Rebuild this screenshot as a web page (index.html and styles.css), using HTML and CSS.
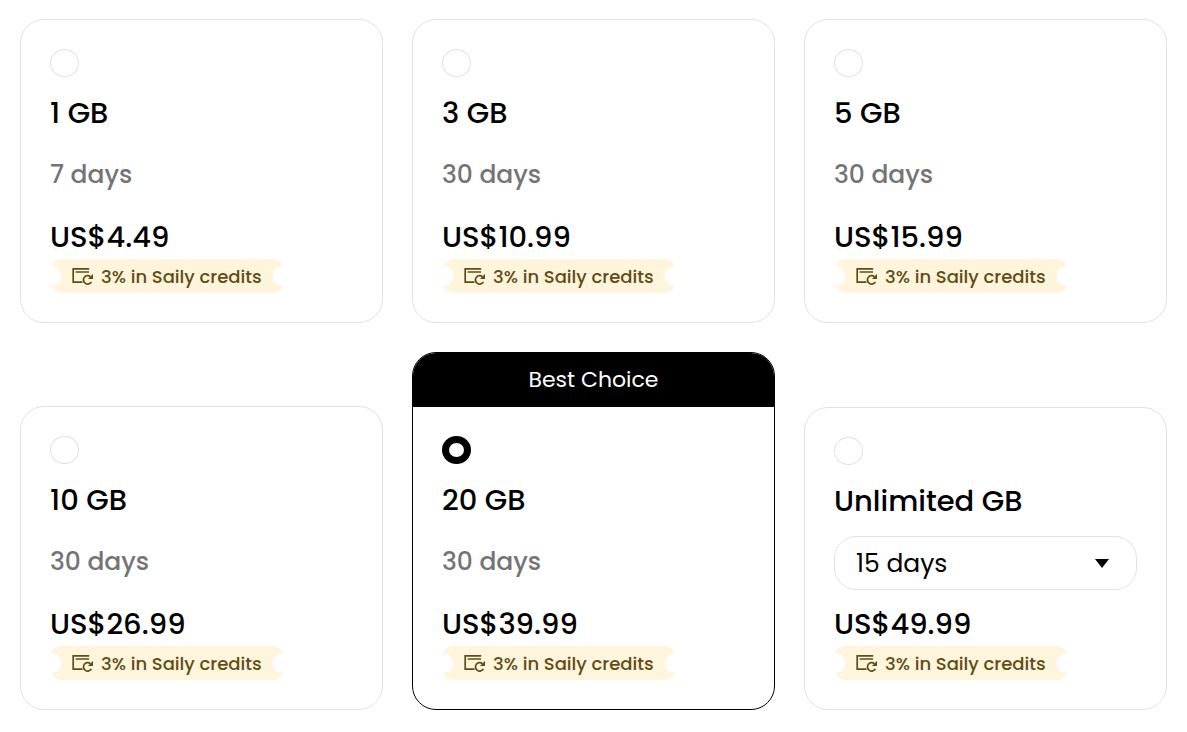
FILE: index.html
```html
<!DOCTYPE html>
<html lang="en">
<head>
    <meta charset="UTF-8">
    <meta name="viewport" content="width=device-width, initial-scale=1.0">
    <title>Choose a data plan</title>
    <link rel="stylesheet" href="styles.css">
</head>
<body>
    <svg class="icon-defs" aria-hidden="true">
        <symbol id="icon-credits" viewBox="0 0 22 18">
            <path d="M10.5 15.2H1.2V1.8H17.2" fill="none" stroke="currentColor" stroke-width="1.7"/>
            <path d="M3.6 5H17" fill="none" stroke="currentColor" stroke-width="1.7"/>
            <path d="M18.6 9.8A4.2 4.2 0 1 0 19.4 14.8" fill="none" stroke="currentColor" stroke-width="1.7"/>
            <path d="M21 6.8V12H15.8L18.4 9.8Z" fill="currentColor"/>
        </symbol>
    </svg>

    <form class="plans">
        <div class="plan">
            <div class="plan-body">
                <input class="plan-radio" type="radio" name="plan" id="plan-1">
                <label class="plan-size" for="plan-1">1 GB</label>
                <div class="plan-days">7 days</div>
                <div class="plan-price">US$4.49</div>
                <div class="credits"><svg class="credits-icon"><use href="#icon-credits"/></svg>3% in Saily credits</div>
            </div>
        </div>

        <div class="plan">
            <div class="plan-body">
                <input class="plan-radio" type="radio" name="plan" id="plan-3">
                <label class="plan-size" for="plan-3">3 GB</label>
                <div class="plan-days">30 days</div>
                <div class="plan-price">US$10.99</div>
                <div class="credits"><svg class="credits-icon"><use href="#icon-credits"/></svg>3% in Saily credits</div>
            </div>
        </div>

        <div class="plan">
            <div class="plan-body">
                <input class="plan-radio" type="radio" name="plan" id="plan-5">
                <label class="plan-size" for="plan-5">5 GB</label>
                <div class="plan-days">30 days</div>
                <div class="plan-price">US$15.99</div>
                <div class="credits"><svg class="credits-icon"><use href="#icon-credits"/></svg>3% in Saily credits</div>
            </div>
        </div>

        <div class="plan">
            <div class="plan-body">
                <input class="plan-radio" type="radio" name="plan" id="plan-10">
                <label class="plan-size" for="plan-10">10 GB</label>
                <div class="plan-days">30 days</div>
                <div class="plan-price">US$26.99</div>
                <div class="credits"><svg class="credits-icon"><use href="#icon-credits"/></svg>3% in Saily credits</div>
            </div>
        </div>

        <div class="plan plan-best">
            <div class="plan-banner">Best Choice</div>
            <div class="plan-body">
                <input class="plan-radio" type="radio" name="plan" id="plan-20" checked>
                <label class="plan-size" for="plan-20">20 GB</label>
                <div class="plan-days">30 days</div>
                <div class="plan-price">US$39.99</div>
                <div class="credits"><svg class="credits-icon"><use href="#icon-credits"/></svg>3% in Saily credits</div>
            </div>
        </div>

        <div class="plan">
            <div class="plan-body">
                <input class="plan-radio" type="radio" name="plan" id="plan-unlimited">
                <label class="plan-size" for="plan-unlimited">Unlimited GB</label>
                <div class="select-wrap">
                    <select class="plan-select" aria-label="Plan duration">
                        <option>10 days</option>
                        <option selected>15 days</option>
                        <option>30 days</option>
                    </select>
                    <svg class="select-arrow" viewBox="0 0 14 9" aria-hidden="true"><path d="M0 0H14L7 9Z"/></svg>
                </div>
                <div class="plan-price">US$49.99</div>
                <div class="credits"><svg class="credits-icon"><use href="#icon-credits"/></svg>3% in Saily credits</div>
            </div>
        </div>
    </form>
</body>
</html>
```
FILE: styles.css
```css
* {
    box-sizing: border-box;
}

body {
    margin: 0;
    padding: 19px 20px;
    background-color: #fff;
    color: #000;
    font-family: Poppins, Inter, sans-serif;
}

.icon-defs {
    display: none;
}

.plans {
    display: grid;
    grid-template-columns: repeat(3, 1fr);
    gap: 29px;
    align-items: end;
}

.plan {
    border: 1px solid #e2e2e4;
    border-radius: 24px;
    overflow: hidden;
}

.plan-best {
    border-color: #000;
}

.plan-banner {
    background-color: #000;
    color: #fff;
    font-size: 22px;
    line-height: 54px;
    text-align: center;
}

.plan-body {
    display: flex;
    flex-direction: column;
    align-items: flex-start;
    padding: 29px;
}

.plan-radio {
    appearance: none;
    width: 29px;
    height: 28px;
    margin: 0 0 14px;
    border: 1px solid #e2e2e4;
    border-radius: 50%;
    background-color: #fff;
    cursor: pointer;
}

.plan-radio:checked {
    border: 7px solid #000;
}

.plan-size,
.plan-price {
    font-size: 29px;
    font-weight: 500;
    line-height: 44px;
}

.plan-days {
    margin: 13px 0;
    color: #747476;
    font-size: 25px;
    font-weight: 500;
    line-height: 54px;
}

.select-wrap {
    position: relative;
    width: 100%;
    margin: 13px 0 12px;
}

.plan-select {
    display: block;
    appearance: none;
    width: 100%;
    height: 54px;
    padding: 0 21px;
    border: 1px solid #e2e2e4;
    border-radius: 22px;
    background-color: #fff;
    color: #000;
    font-family: inherit;
    font-size: 25px;
}

.select-arrow {
    position: absolute;
    top: 23px;
    right: 28px;
    width: 14px;
    height: 9px;
    pointer-events: none;
}

/* ticket shape, notched on both sides */
.credits {
    display: flex;
    align-items: center;
    gap: 7px;
    height: 34px;
    margin-left: 1px;
    padding: 0 21px;
    border-radius: 10px;
    background:
        radial-gradient(circle at 1px 50%, #fff 9px, transparent 10px) left / 50% 100% no-repeat,
        radial-gradient(circle at calc(100% - 1px) 50%, #fff 9px, transparent 10px) right / 50% 100% no-repeat,
        #fff4dc;
    color: #5f4d14;
    font-size: 18px;
    font-weight: 500;
    white-space: nowrap;
}

.credits-icon {
    width: 22px;
    height: 18px;
}
```
